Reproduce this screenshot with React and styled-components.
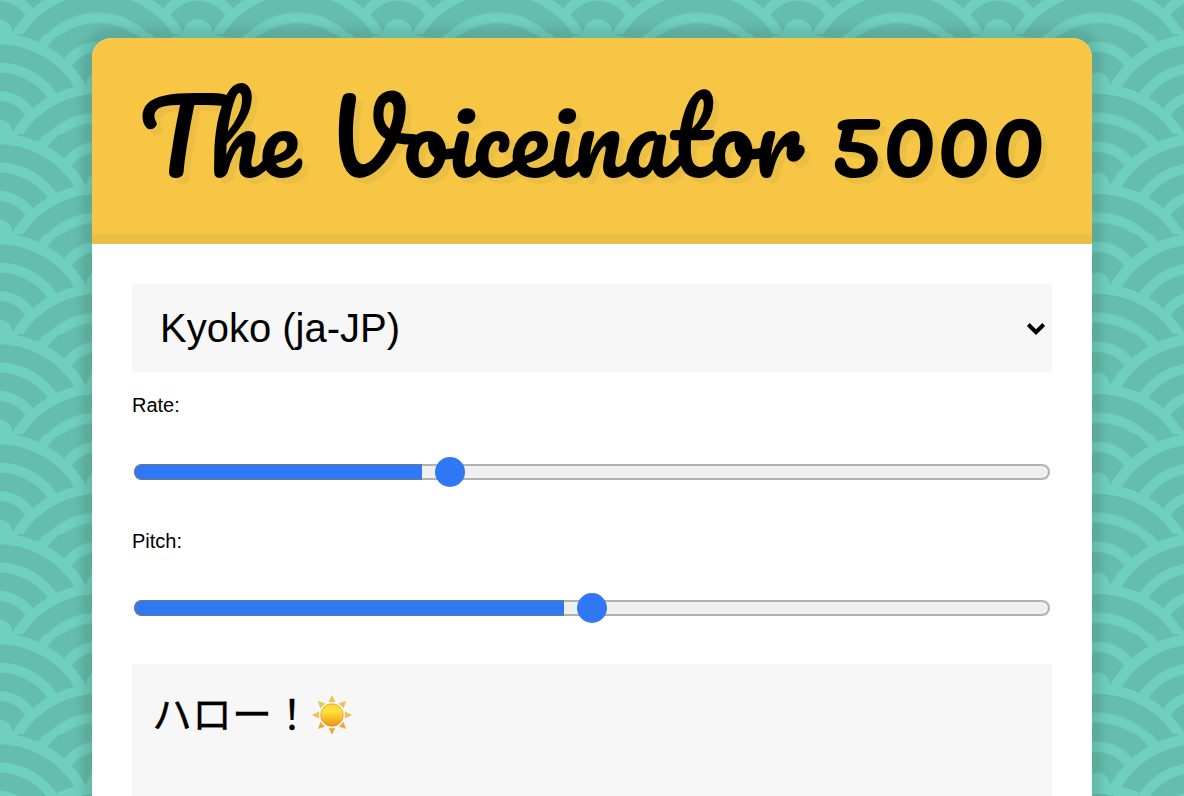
import React from "react";
import styled, { createGlobalStyle } from "styled-components";

const D = "#65bdad";
const L = "#70d0be";

const side = `${L} 5%, ${D} 6%, ${D} 15%, ${L} 16%, ${L} 20%, ${D} 21%, ${D} 30%, ${L} 31%, ${L} 35%, ${D} 36%, ${D} 45%, ${L} 46%, ${L} 49%, transparent 50%, transparent`;
const lower = `${D} 24%, ${L} 25%, ${L} 28%, ${D} 29%, ${D} 36%, ${L} 36%, ${L} 40%, transparent 40%, transparent`;
const middle = `${L} 10%, ${D} 11%, ${D} 23%, ${L} 24%, ${L} 30%, ${D} 31%, ${D} 43%, ${L} 44%, ${L} 50%, ${D} 51%, ${D} 63%, ${L} 64%, ${L} 71%, transparent 71%, transparent`;

const GlobalStyle = createGlobalStyle`
  *, *::before, *::after { box-sizing: border-box; }
  html, body { margin: 0; height: 100%; overflow: hidden; }
  body { font-family: "Helvetica Neue", "Liberation Sans", Arial, sans-serif; color: #000; }
`;

const Page = styled.main`
  display: flex;
  justify-content: center;
  height: 100vh;
  padding-top: 38px;
  overflow: hidden;
  background-color: ${D};
  background-image:
    radial-gradient(circle at 100% 150%, ${lower}),
    radial-gradient(circle at 0 150%, ${lower}),
    radial-gradient(circle at 50% 100%, ${middle}),
    radial-gradient(circle at 100% 50%, ${side}),
    radial-gradient(circle at 0 50%, ${side});
  background-size: 200px 100px;
  background-position: -102px 34px;
`;

const Card = styled.section`
  flex: none;
  width: 1000px;
  height: 900px;
  border-radius: 20px;
  overflow: hidden;
  background: #fff;
  box-shadow: 0 0 10px 10px rgba(0, 0, 0, 0.1);
`;

const Title = styled.h1`
  height: 206px;
  margin: 0;
  padding: 10px 0;
  border-bottom: 10px solid #ebbf44;
  background: #f7c645;
  font-family: Pacifico, cursive;
  font-weight: 400;
  font-size: 100px;
  text-align: center;
  white-space: nowrap;
  text-shadow: 6px 6px 0 #ebbf44;
`;

const Controls = styled.div`
  display: flex;
  flex-direction: column;
  padding: 40px;
`;

const Select = styled.button`
  display: flex;
  align-items: center;
  justify-content: space-between;
  height: 88px;
  padding: 0 6px 0 28px;
  border: 0;
  background: #f7f7f7;
  color: #000;
  font: 40px "Liberation Sans", Arial, sans-serif;
`;

const Chevron = styled.svg`
  width: 20px;
  height: 14px;
  margin-top: 1px;
`;

const Field = styled.div`
  display: flex;
  flex-direction: column;
  height: 136px;
  padding-top: 22px;
`;

const Label = styled.label`
  font-size: 20px;
  line-height: 23px;
`;

const Track = styled.div`
  position: relative;
  height: 16px;
  margin: 47px 2px 0;
  border-radius: 8px;
  background: #efefef;
  box-shadow: inset 0 0 0 2px #b2b2b2;
`;

const Fill = styled.div`
  height: 16px;
  border: 2px solid #4f79b8;
  border-right: 0;
  border-radius: 8px 0 0 8px;
  background: #3178f7;
`;

const Thumb = styled.div`
  position: absolute;
  top: -7px;
  width: 30px;
  height: 30px;
  border-radius: 50%;
  background: #3178f7;
`;

const Message = styled.div`
  display: flex;
  align-items: flex-start;
  height: 240px;
  margin-top: 20px;
  padding: 18px 20px 0;
  background: #f7f7f7;
  font: 40px/60px "Noto Sans CJK JP", sans-serif;
  -webkit-text-stroke: 0.3px #000;
`;

const SunIcon = styled.svg`
  flex: none;
  width: 40px;
  height: 40px;
  margin-top: 13px;
`;

function Slider({ label, fill, thumb }) {
  return (
    <Field>
      <Label>{label}</Label>
      <Track>
        <Fill style={{ width: fill }} />
        <Thumb style={{ left: thumb }} />
      </Track>
    </Field>
  );
}

function Sun() {
  return (
    <SunIcon viewBox="0 0 40 40">
      <defs>
        <linearGradient id="disc" x1="0" y1="0" x2="0" y2="1">
          <stop offset="0" stopColor="#fbd52f" />
          <stop offset="0.35" stopColor="#fde13c" />
          <stop offset="1" stopColor="#ee9310" />
        </linearGradient>
      </defs>
      {[0, 45, 90, 135, 180, 225, 270, 315].map((angle) => (
        <path
          key={angle}
          d="M20 .8L22.9 6.9Q20 5.9 17.1 6.9Z"
          fill={angle > 90 && angle < 270 ? "#f3a51f" : "#f8c535"}
          stroke="#e5a34a"
          strokeWidth=".5"
          transform={`rotate(${angle} 20 20)`}
        />
      ))}
      <circle cx="20" cy="20" r="11.3" fill="url(#disc)" stroke="#d98b18" strokeWidth=".6" />
    </SunIcon>
  );
}

export default function App() {
  return (
    <>
      <GlobalStyle />
      <Page>
        <Card>
          <Title>The Voiceinator 5000</Title>
          <Controls>
            <Select type="button">
              <span>Kyoko (ja-JP)</span>
              <Chevron viewBox="0 0 20 14">
                <path d="M2.3 2.5L10 10.2L17.7 2.5" fill="none" stroke="#000" strokeWidth="4" />
              </Chevron>
            </Select>
            <Slider label="Rate:" fill={288} thumb={301} />
            <Slider label="Pitch:" fill={430} thumb={443} />
            <Message>
              <span>ハロー！</span>
              <Sun />
            </Message>
          </Controls>
        </Card>
      </Page>
    </>
  );
}
